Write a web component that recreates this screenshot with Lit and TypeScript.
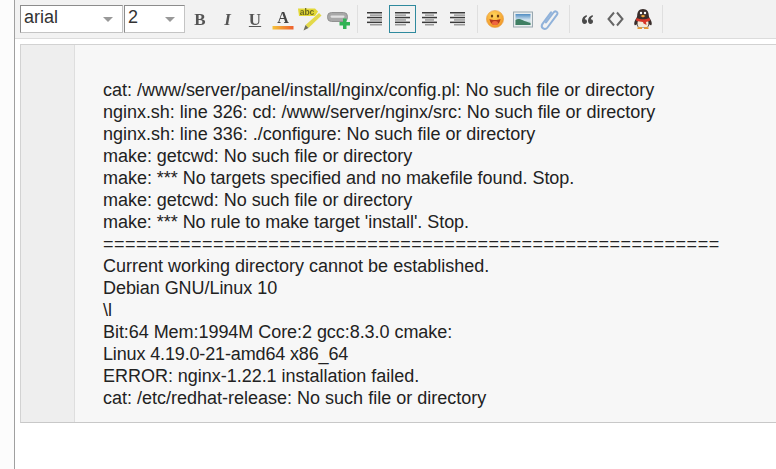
import { LitElement, html, css, svg } from "lit";
import { customElement } from "lit/decorators.js";
import { styleMap } from "lit/directives/style-map.js";

/* Each line with the pixel difference in its run width against Arial's hinted metrics. */
const LOG: [string, number][] = [
  ["cat: /www/server/panel/install/nginx/config.pl: No such file or directory", -1],
  ["nginx.sh: line 326: cd: /www/server/nginx/src: No such file or directory", -2],
  ["nginx.sh: line 336: ./configure: No such file or directory", -1],
  ["make: getcwd: No such file or directory", -1],
  ["make: *** No targets specified and no makefile found. Stop.", -2],
  ["make: getcwd: No such file or directory", -1],
  ["make: *** No rule to make target 'install'. Stop.", -2],
  ["========================================================", 28],
  ["Current working directory cannot be established.", 0],
  ["Debian GNU/Linux 10", -1],
  ["\\l", 0],
  ["Bit:64 Mem:1994M Core:2 gcc:8.3.0 cmake:", -2],
  ["Linux 4.19.0-21-amd64 x86_64", -4],
  ["ERROR: nginx-1.22.1 installation failed.", -1],
  ["cat: /etc/redhat-release: No such file or directory", 0],
];

const align = (rows: [number, number][]) => svg`<svg width="16" height="16" viewBox="0 0 16 16">
  ${rows.map(([x, w], i) => svg`<rect x=${x} y=${1 + i * 2.4} width=${w} height="1.5" fill=${i % 2 ? "#9a9a9a" : "#3a3a3a"}/>`)}
</svg>`;

const icons = {
  color: html`<svg width="24" height="24" viewBox="0 0 24 24">
    <text x="12" y="15.500" text-anchor="middle" font-family="Liberation Serif" font-weight="700" font-size="16" fill="#444">A</text>
    <defs><linearGradient id="cg"><stop offset="0" stop-color="#f5c33b"/><stop offset="1" stop-color="#ee5f2d"/></linearGradient></defs>
    <rect x="1.500" y="19" width="21" height="3.500" fill="url(#cg)"/></svg>`,
  mark: html`<svg width="26" height="24" viewBox="0 0 26 24">
    <path d="M1 1.500h17l3 3-3 4.500H2z" fill="#e3d837"/>
    <text x="10" y="7.800" text-anchor="middle" font-family="Liberation Sans" font-weight="700" font-size="8.500" fill="#6b6a20">abc</text>
    <path d="M22 6l2.500 2.500L11.500 21 8.500 18z" fill="#e3d94a"/>
    <path d="M8.500 18l3 3-5 2.500z" fill="#6e6e5a"/></svg>`,
  link: html`<svg width="24" height="24" viewBox="0 0 24 24">
    <rect x="1.500" y="5.500" width="20" height="9" rx="4" fill="#a8a8a8" stroke="#929292"/>
    <rect x="4.500" y="8.500" width="14" height="2.200" rx="1.100" fill="#e2e2e2"/>
    <path d="M15.500 15h3.500v-3.500h3.500V15H26v3.500h-3.500V22H19v-3.500h-3.500z" transform="translate(-2 0)" fill="#33b356"/></svg>`,
  smile: html`<svg width="22" height="24" viewBox="0 0 22 24">
    <defs><radialGradient id="sg" cx=".45" cy=".3" r=".8"><stop offset="0" stop-color="#ffd65c"/><stop offset="1" stop-color="#ee8a1e"/></radialGradient></defs>
    <circle cx="11" cy="12" r="8.600" fill="url(#sg)" stroke="#e8a34c" stroke-width=".6"/>
    <ellipse cx="8" cy="9" rx="1.200" ry="1.600" fill="#6a3c12"/><ellipse cx="14" cy="9" rx="1.200" ry="1.600" fill="#6a3c12"/>
    <path d="M5.500 12c3 1.400 8 1.400 11 0-.6 4-3 6-5.500 6s-4.900-2-5.500-6z" fill="#b5361a"/>
    <ellipse cx="11" cy="16" rx="3" ry="2" fill="#f0663f"/></svg>`,
  image: html`<svg width="22" height="24" viewBox="0 0 22 24">
    <defs><linearGradient id="ig" x1="0" y1="0" x2="0" y2="1"><stop offset="0" stop-color="#4f8cc2"/><stop offset=".55" stop-color="#d5e6f0"/><stop offset="1" stop-color="#a9cfc2"/></linearGradient></defs>
    <rect x="1.500" y="5" width="19" height="15" fill="#e9eef0" stroke="#9aa8b0"/>
    <rect x="3.500" y="7" width="15" height="11" fill="url(#ig)"/>
    <path d="M3.500 13c4-2.500 6 .5 15 3v2h-15z" fill="#3f7f63"/></svg>`,
  clip: html`<svg width="22" height="24" viewBox="0 0 22 24" fill="none">
    <path d="M7 15.500L14.500 5.500c1.800-2.400 5.200-.3 3.500 2.200L8.500 20.500c-2.600 3.300-7.500.4-5-3.600l8.500-11.500" stroke="#90b2da" stroke-width="2" stroke-linecap="round"/></svg>`,
  quote: html`<svg width="11" height="9" viewBox="0 0 11 9" fill="#4a4a4a">
    <path d="M4.500 0C2 1 0 2.800 0 5.500 0 7.500 1 9 2.500 9S5 7.900 5 6.500 4 4.200 2.800 4.200C3 3.200 3.700 2.300 5 1.500zM10.500 0C8 1 6 2.800 6 5.500 6 7.500 7 9 8.500 9S11 7.900 11 6.500 10 4.200 8.800 4.200C9 3.200 9.700 2.300 11 1.500z"/></svg>`,
  code: html`<svg width="17" height="16" viewBox="0 0 17 16" fill="none" stroke="#666" stroke-width="2">
    <path d="M7 1.500L1.500 8 7 14.500M10 1.500L15.500 8 10 14.500"/></svg>`,
  qq: html`<svg width="20" height="24" viewBox="0 0 20 24">
    <path d="M10 2c3.800 0 5.800 2.800 5.800 6.500 0 1 .4 2 1.100 3 1.500 2 2.400 4.800 1.500 6.500-.5.700-1.300 0-1.900-.8-.5 2-1.500 3-2.500 3.300H6c-1-.3-2-1.300-2.500-3.300-.6.800-1.400 1.500-1.900.8-.9-1.700 0-4.500 1.500-6.500.7-1 1.100-2 1.100-3C4.200 4.800 6.200 2 10 2z" fill="#3a2e2c"/>
    <path d="M5 13.500c3 1 7 1 10 0 1 3 .5 5.800-1 6.800H6c-1.500-1-2-3.800-1-6.800z" fill="#f4ead8"/>
    <path d="M3.500 11c4 1.800 9 1.800 13 0l.7 2.500c-1.500.9-3 1.200-4.200 1.400l.5 3.100-3-1.500-.5-1.500c-2 0-5-.4-7-1.400z" fill="#d8372a"/>
    <path d="M7.500 9L10 7.700 12.500 9 10 10.500z" fill="#f0a63a"/>
    <circle cx="8" cy="6" r="1.200" fill="#fff"/><circle cx="12" cy="6" r="1.200" fill="#fff"/>
    <path d="M4.500 20.300h4.500v1.700H4.500zM11 20.300h4.500v1.700H11z" fill="#e8962e"/></svg>`,
};

@customElement("app-root")
export class AppRoot extends LitElement {
  static styles = css`
    :host { display: block; width: 776px; height: 469px; overflow: hidden; background: #fcfcfc; font-family: "Liberation Sans", Arial, sans-serif; }
    .page { margin-left: 14px; height: 469px; background: #fff; border-left: 1px solid #a0a0a0; box-sizing: border-box; display: flex; flex-direction: column; }
    .toolbar { height: 39px; box-sizing: border-box; background: #f2f2f2; border-bottom: 1px solid #dcdcdc; padding: 5px 0 0 5px; display: flex; align-items: flex-start; flex: none; }
    .select { height: 28px; box-sizing: border-box; background: #fff; border: 1px solid #c4c4c4; border-top-color: #8c8c8c; border-left-color: #8c8c8c; display: flex; align-items: flex-start; justify-content: space-between; font-size: 18px; line-height: 20px; color: #333; padding: 1px 9px 0 3px; flex: none; }
    .s1 { width: 103px; margin-right: 1px; }
    .s2 { width: 61px; margin-right: 1.250px; }
    .caret { width: 0; height: 0; border: 5px solid transparent; border-top: 5px solid #999; border-bottom: 0; margin-top: 10px; }
    .btn { width: 27.500px; height: 28px; flex: none; box-sizing: border-box; display: flex; align-items: center; justify-content: center; }
    .btn > * { filter: blur(0.450px); }
    .btn.on { border: 1px solid #2f8a9e; }
    .glyph { font-family: "Liberation Serif", serif; font-size: 17px; color: #555; line-height: 1; font-weight: 700; }
    .i { font-style: italic; }
    .u { text-decoration: underline; }
    .sep { width: 1px; height: 28px; margin: 0 3.750px 0 5.250px; background: #dfdfdf; flex: none; }
    .gap { height: 5px; flex: none; }
    .editor { margin-left: 5px; height: 379px; box-sizing: border-box; flex: none; display: flex; border-top: 1px solid #d2d2d2; border-bottom: 1px solid #c8c8c8; border-left: 1px solid #d2d2d2; background: #f7f7f7; }
    .gutter { width: 53px; background: #eeeeee; border-right: 1px solid #dedede; flex: none; }
    .log { padding: 34px 0 0 28px; font: 18px/22px "Liberation Sans", Arial, sans-serif; color: #222; white-space: pre; }
  `;

  render() {
    const L1: [number, number][] = [[0,15],[3,12],[0,15],[3,12],[0,15],[3,12]];
    const L2: [number, number][] = [[0,15],[0,11],[0,15],[0,11],[0,15],[0,11]];
    const L3: [number, number][] = [[0,15],[3,9],[0,15],[3,9],[0,15],[3,9]];
    const L4: [number, number][] = [[0,15],[4,11],[0,15],[4,11],[0,15],[4,11]];
    return html`<div class="page">
      <div class="toolbar">
        <div class="select s1">arial<span class="caret"></span></div>
        <div class="select s2">2<span class="caret"></span></div>
        <div class="btn"><span class="glyph">B</span></div>
        <div class="btn"><span class="glyph i">I</span></div>
        <div class="btn"><span class="glyph u">U</span></div>
        <div class="btn">${icons.color}</div>
        <div class="btn">${icons.mark}</div>
        <div class="btn">${icons.link}</div>
        <div class="sep"></div>
        <div class="btn">${align(L1)}</div>
        <div class="btn on">${align(L2)}</div>
        <div class="btn">${align(L3)}</div>
        <div class="btn">${align(L4)}</div>
        <div class="sep"></div>
        <div class="btn">${icons.smile}</div>
        <div class="btn">${icons.image}</div>
        <div class="btn">${icons.clip}</div>
        <div class="sep"></div>
        <div class="btn">${icons.quote}</div>
        <div class="btn">${icons.code}</div>
        <div class="btn">${icons.qq}</div>
        <div class="sep"></div>
      </div>
      <div class="gap"></div>
      <div class="editor">
        <div class="gutter"></div>
        <div class="log">${LOG.map(([text, delta]) => html`<div style=${styleMap({ letterSpacing: `${delta / text.length}px` })}>${text}</div>`)}</div>
      </div>
    </div>`;
  }
}
